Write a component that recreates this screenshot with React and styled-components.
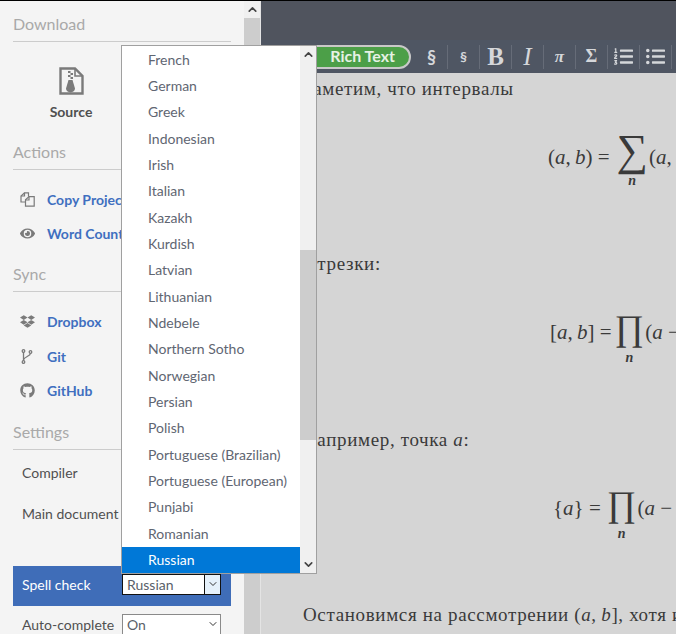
import React from 'react'
import styled, { createGlobalStyle } from 'styled-components'
import { FaEye, FaDropbox, FaGithub, FaListOl, FaListUl } from 'react-icons/fa'
import { ChevronUp, ChevronDown } from 'lucide-react'

const GlobalStyle = createGlobalStyle`
  html, body {
    margin: 0;
    padding: 0;
    width: 676px;
    height: 634px;
    overflow: hidden;
    background: #000;
  }
  * { box-sizing: border-box; }
`

const Shell = styled.div`
  position: relative;
  display: flex;
  width: 676px;
  height: 634px;
  padding-top: 1px;
  overflow: hidden;
  font-family: Lato, "Liberation Sans", sans-serif;
`

const Sidebar = styled.div`
  width: 244px;
  flex: none;
  background: #f4f4f4;
  padding: 13px 13px 0 13px;
  overflow: hidden;
`

const SectionTitle = styled.div`
  font-size: 16px;
  line-height: 19px;
  color: #a9a9a9;
  border-bottom: 1px solid #ccc;
  padding-bottom: 8px;
  margin-top: ${p => p.$gap || 0}px;
`

const SourceTile = styled.div`
  width: 116px;
  display: flex;
  flex-direction: column;
  align-items: center;
  margin-top: 25px;
  color: #7a7a7a;
`

const SourceLabel = styled.div`
  font-size: 14px;
  line-height: 17px;
  font-weight: 700;
  color: #505050;
  margin-top: 8px;
`

const LinkList = styled.div`
  display: flex;
  flex-direction: column;
  gap: ${p => p.$gap}px;
  margin-top: ${p => p.$top}px;
  padding-left: 7px;
`

const LinkRow = styled.div`
  display: flex;
  align-items: center;
  height: 17px;
  color: #7a7a7a;
  font-size: 15px;
  white-space: nowrap;
`

const LinkIcon = styled.span`
  width: 27px;
  flex: none;
  display: flex;
  align-items: center;
`

const LinkText = styled.span`
  font-size: 14px;
  font-weight: 700;
  color: #3f6fc0;
`

const SettingRow = styled.div`
  display: flex;
  align-items: ${p => (p.$center ? 'center' : 'flex-start')};
  height: ${p => p.$height}px;
  margin-top: ${p => p.$top || 0}px;
  padding: 0 0 ${p => (p.$center ? 4 : 0)}px 9px;
  font-size: 14px;
  line-height: 17px;
  white-space: nowrap;
  color: ${p => (p.$active ? '#fff' : '#505050')};
  background: ${p => (p.$active ? '#3f6db8' : 'transparent')};
`

const SettingLabel = styled.span`
  width: 100px;
  flex: none;
`

const SelectBox = styled.div`
  width: 99px;
  height: 21px;
  display: flex;
  align-items: center;
  justify-content: space-between;
  padding-left: 4px;
  background: #fff;
  border: 1px solid ${p => (p.$focused ? '#111' : '#8a8a8a')};
  color: #5a5f6a;
  font-size: 14px;
`

const SelectArrow = styled.span`
  width: 16px;
  align-self: stretch;
  display: flex;
  align-items: center;
  justify-content: center;
  color: #333;
  background: ${p => (p.$focused ? '#e5f1fb' : 'transparent')};
  border-left: 1px solid ${p => (p.$focused ? '#111' : 'transparent')};
`

const ScrollTrack = styled.div`
  width: 16px;
  flex: none;
  display: flex;
  flex-direction: column;
  background: #f0f0f0;
  color: #444;
`

const ScrollEnd = styled.div`
  height: 17px;
  flex: none;
  display: flex;
  align-items: center;
  justify-content: center;
  margin-top: ${p => (p.$bottom ? 'auto' : 0)};
`

const ScrollThumb = styled.div`
  flex: ${p => (p.$fill ? 1 : 'none')};
  height: ${p => p.$height || 0}px;
  margin-top: ${p => p.$top || 0}px;
  background: #cdcdcd;
`

const Main = styled.div`
  flex: 1;
  min-width: 0;
  display: flex;
  flex-direction: column;
  border-left: 1px solid #e4e4e4;
`

const TopBar = styled.div`
  height: 39px;
  flex: none;
  background: #50545e;
`

const Toolbar = styled.div`
  height: 33px;
  flex: none;
  display: flex;
  align-items: center;
  padding-left: 42px;
  background: #4f5663;
  white-space: nowrap;
`

const ModePill = styled.div`
  width: 108px;
  height: 24px;
  flex: none;
  margin-right: 5px;
  display: flex;
  align-items: center;
  justify-content: flex-end;
  padding: 0 14px 2px 0;
  border: 2px solid #c9c9c9;
  border-radius: 12px;
  background: #4c9f48;
  color: #e6f2e4;
  font-size: 16px;
  font-weight: 700;
`

const ToolButton = styled.div`
  width: 32px;
  height: 24px;
  flex: none;
  display: flex;
  align-items: center;
  justify-content: center;
  border-right: 1px solid #666c78;
  color: #d5d7da;
  font-family: ${p => (p.$sans ? 'Lato, sans-serif' : '"Liberation Serif", serif')};
  font-weight: ${p => (p.$italic && p.$size > 20 ? 400 : 700)};
  font-style: ${p => (p.$italic ? 'italic' : 'normal')};
  font-size: ${p => p.$size}px;
`

const Editor = styled.div`
  flex: 1;
  min-height: 0;
  overflow: hidden;
  padding: 4px 0 0 42px;
  background: #d5d5d5;
  color: #3a3a3a;
  font-family: "Liberation Serif", serif;
  font-size: 19px;
  line-height: 24px;
  white-space: nowrap;
  letter-spacing: 0.65px;
`

const Paragraph = styled.div`
  height: 24px;
  margin-top: ${p => p.$top || 0}px;
`

const Equation = styled.div`
  display: flex;
  align-items: flex-start;
  height: 66px;
  margin: 26px 0 0 ${p => p.$left}px;
  font-size: 21px;
  line-height: 28px;
  letter-spacing: 0;
`

const Side = styled.span`
  padding-top: 16px;
`

const BigOperator = styled.span`
  display: flex;
  flex-direction: column;
  align-items: center;
  margin: 0 1px 0 ${p => p.$gap}px;
  padding-top: ${p => p.$drop}px;
  font-size: ${p => p.$size}px;
  line-height: 48px;
`

const Under = styled.i`
  font-size: 14px;
  font-weight: 700;
  line-height: 12px;
`

const Dropdown = styled.div`
  position: absolute;
  left: 121px;
  top: 45px;
  width: 196px;
  height: 529px;
  display: flex;
  background: #fff;
  border: 1px solid #a0a0a0;
`

const OptionList = styled.div`
  flex: 1;
  min-width: 0;
  padding-top: 0.5px;
  overflow: hidden;
`

const Option = styled.div`
  height: 26.35px;
  line-height: 26.35px;
  padding-left: 26px;
  font-size: 14px;
  white-space: nowrap;
  color: ${p => (p.$selected ? '#fff' : '#5f6672')};
  background: ${p => (p.$selected ? '#0078d7' : 'transparent')};
`

const ZipIcon = () => (
  <svg width="25" height="28" viewBox="0 0 25 28" fill="none">
    <path d="M1.5 1.5H16L23.5 9V26.5H1.5Z" stroke="currentColor" strokeWidth="2.4" />
    <path d="M16 1.5V9H23.5" stroke="currentColor" strokeWidth="1.6" />
    <path d="M9 4h2.5v2H9zM11.5 6H14v2h-2.5zM9 8h2.5v2H9zM11.5 10H14v2h-2.5z" fill="currentColor" />
    <path d="M9.5 13h4l2.5 8.5a4 3.5 0 0 1-9 0Z" fill="currentColor" />
  </svg>
)

const CopyIcon = () => (
  <svg width="15" height="15" viewBox="0 0 15 15" fill="none" stroke="currentColor" strokeWidth="1.2">
    <path d="M5.5 10H1V4L4.5 .8H8.5V4.5" />
    <path d="M4.5 .8V4H1" />
    <path d="M5.5 14.2V7.8L9 4.6H14.2V14.2Z" />
    <path d="M9 4.6V8H5.5" />
  </svg>
)

const BranchIcon = () => (
  <svg width="14" height="15" viewBox="0 0 14 15" fill="none" stroke="currentColor" strokeWidth="1.3">
    <circle cx="3.5" cy="2" r="1.3" />
    <circle cx="3.5" cy="13" r="1.3" />
    <circle cx="10.5" cy="3" r="1.3" />
    <path d="M3.5 3.3V11.7M10.5 4.3C10.5 7.5 4 7.5 3.5 11" />
  </svg>
)

const languages = [
  'French', 'German', 'Greek', 'Indonesian', 'Irish', 'Italian', 'Kazakh', 'Kurdish', 'Latvian',
  'Lithuanian', 'Ndebele', 'Northern Sotho', 'Norwegian', 'Persian', 'Polish',
  'Portuguese (Brazilian)', 'Portuguese (European)', 'Punjabi', 'Romanian', 'Russian',
]

const links = {
  actions: [[<CopyIcon key="c" />, 'Copy Project'], [<FaEye key="e" />, 'Word Count']],
  sync: [[<FaDropbox key="d" />, 'Dropbox'], [<BranchIcon key="g" />, 'Git'], [<FaGithub key="h" />, 'GitHub']],
}

const Links = ({ items, gap, top }) => (
  <LinkList $gap={gap} $top={top}>
    {items.map(([icon, label]) => (
      <LinkRow key={label}>
        <LinkIcon>{icon}</LinkIcon>
        <LinkText>{label}</LinkText>
      </LinkRow>
    ))}
  </LinkList>
)

const Formula = ({ left, lhs, op, size, gap, drop, rhs }) => (
  <Equation $left={left}>
    <Side>{lhs}</Side>
    <BigOperator $size={size} $gap={gap} $drop={drop}>{op}<Under>n</Under></BigOperator>
    <Side>{rhs}</Side>
  </Equation>
)

export default function App() {
  return (
    <Shell>
      <GlobalStyle />
      <Sidebar>
        <SectionTitle>Download</SectionTitle>
        <SourceTile>
          <ZipIcon />
          <SourceLabel>Source</SourceLabel>
        </SourceTile>
        <SectionTitle $gap={22}>Actions</SectionTitle>
        <Links items={links.actions} gap={17} top={21} />
        <SectionTitle $gap={22}>Sync</SectionTitle>
        <Links items={links.sync} gap={17.5} top={21} />
        <SectionTitle $gap={23}>Settings</SectionTitle>
        <SettingRow $height={41} $top={14}><SettingLabel>Compiler</SettingLabel></SettingRow>
        <SettingRow $height={61}><SettingLabel>Main document</SettingLabel></SettingRow>
        <SettingRow $center $active $height={40}>
          <SettingLabel>Spell check</SettingLabel>
          <SelectBox $focused>
            Russian
            <SelectArrow $focused><ChevronDown size={12} /></SelectArrow>
          </SelectBox>
        </SettingRow>
        <SettingRow $center $height={30} $top={5}>
          <SettingLabel>Auto-complete</SettingLabel>
          <SelectBox>
            On
            <SelectArrow><ChevronDown size={12} /></SelectArrow>
          </SelectBox>
        </SettingRow>
      </Sidebar>
      <ScrollTrack>
        <ScrollEnd><ChevronUp size={13} strokeWidth={3} /></ScrollEnd>
        <ScrollThumb $fill />
      </ScrollTrack>
      <Main>
        <TopBar />
        <Toolbar>
          <ModePill>Rich Text</ModePill>
          <ToolButton $sans $size={18}>§</ToolButton>
          <ToolButton $sans $size={14}>§</ToolButton>
          <ToolButton $size={25}>B</ToolButton>
          <ToolButton $size={25} $italic>I</ToolButton>
          <ToolButton $size={17} $italic>π</ToolButton>
          <ToolButton $size={18}>Σ</ToolButton>
          <ToolButton $size={19}><FaListOl /></ToolButton>
          <ToolButton $size={19}><FaListUl /></ToolButton>
        </Toolbar>
        <Editor>
          <Paragraph>Заметим, что интервалы</Paragraph>
          <Formula left={245} size={44} gap={7} drop={0} lhs={<>(<i>a</i>,{'\u2009'}<i>b</i>) =</>} op="∑" rhs={<>(<i>a</i>, <i>b</i></>} />
          <Paragraph $top={59}>Отрезки:</Paragraph>
          <Formula left={247} size={36} gap={3} drop={2} lhs={<>[<i>a</i>,{'\u2009'}<i>b</i>] =</>} op="∏" rhs={<>(<i>a</i> − <i>b</i></>} />
          <Paragraph $top={60}>Например, точка <i>a</i>:</Paragraph>
          <Formula left={250} size={36} gap={6} drop={2} lhs={<>{'{'}<i>a</i>{'}'} =</>} op="∏" rhs={<>(<i>a</i> − <i>b</i></>} />
          <Paragraph $top={59}>Остановимся на рассмотрении (<i>a</i>,{'\u2009'}<i>b</i>], хотя и</Paragraph>
        </Editor>
      </Main>
      <Dropdown>
        <OptionList>
          {languages.map(name => (
            <Option key={name} $selected={name === 'Russian'}>{name}</Option>
          ))}
        </OptionList>
        <ScrollTrack>
          <ScrollEnd><ChevronUp size={13} strokeWidth={3} /></ScrollEnd>
          <ScrollThumb $top={187} $height={190} />
          <ScrollEnd $bottom><ChevronDown size={13} strokeWidth={3} /></ScrollEnd>
        </ScrollTrack>
      </Dropdown>
    </Shell>
  )
}
